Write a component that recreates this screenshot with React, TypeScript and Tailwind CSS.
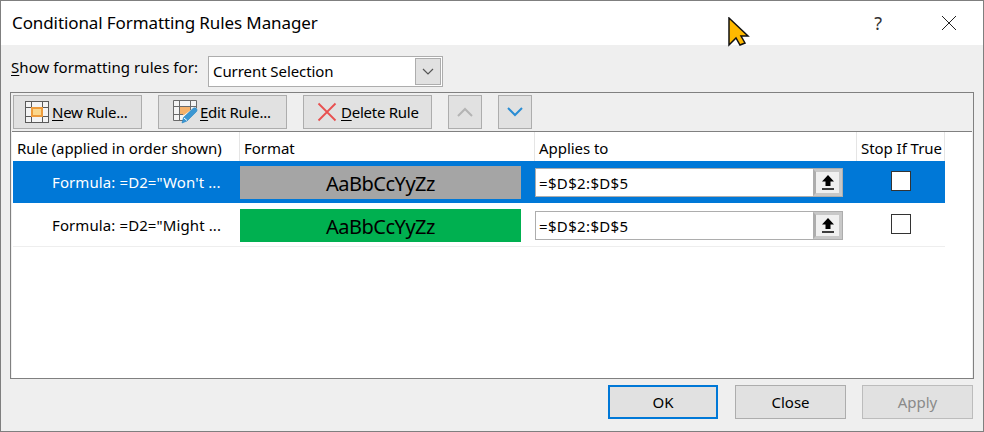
const FONT = "font-['Noto_Sans','Open_Sans',sans-serif]";

function GridIcon() {
  return (
    <svg width="24" height="22" viewBox="0 0 24 22" className="shrink-0">
      <rect x="0.5" y="0.5" width="23" height="21" fill="#f4f4f4" stroke="#5a5a5a" />
      <path d="M0 6.5H24M0 15.5H24M6.5 0V22M17.5 0V22" stroke="#5a5a5a" fill="none" />
      <rect x="7" y="7" width="10" height="8" fill="#fbd78b" stroke="#ed9b3c" strokeWidth="2" />
    </svg>
  );
}

function EditIcon() {
  return (
    <svg width="25" height="24" viewBox="0 0 25 24" className="shrink-0">
      <path d="M0.5 0.5H23.5V8L10 20.5H0.5Z" fill="#f4f4f4" stroke="#6a6a6a" />
      <path d="M7 6H18V10L11 15H7Z" fill="#f6b26b" />
      <path d="M0 6.5H23M0 14.5H10M6.5 0V20M17.5 0V10" stroke="#6a6a6a" fill="none" />
      <path d="M9 23L10.5 17.5L20 8.5C21 7.6 22.6 7.7 23.4 8.6C24.2 9.5 24.2 10.9 23.3 11.8L14 21Z" fill="#3b97d3" stroke="#1f7fc0" strokeWidth="0.6" />
      <path d="M11 18L14 20.5" stroke="#ffffff" />
    </svg>
  );
}

function DeleteIcon() {
  return (
    <svg width="20" height="20" viewBox="0 0 20 20" className="shrink-0">
      <path d="M1.5 1.5L18.5 18.5M18.5 1.5L1.5 18.5" stroke="#e8504f" strokeWidth="1.8" fill="none" />
    </svg>
  );
}

function ToolButton({ icon, hot, rest, gap, w }: { icon: React.ReactNode; hot: string; rest: string; gap: string; w: string }) {
  return (
    <button className={`h-[34px] ${w} bg-[#e1e1e1] border border-[#adadad] flex items-center ${gap} text-[15px] text-[#000] shrink-0`}>
      {icon}
      <span className="tracking-[-0.25px] pt-px">
        <span className="underline underline-offset-2">{hot}</span>
        {rest}
      </span>
    </button>
  );
}

function Chevron({ up, color }: { up?: boolean; color: string }) {
  return (
    <svg width="16" height="10" viewBox="0 0 16 10">
      <path d={up ? 'M1 9L8 2L15 9' : 'M1 1L8 8L15 1'} stroke={color} strokeWidth="2" fill="none" />
    </svg>
  );
}

function RuleRow({ text, selected, swatch, last }: { text: string; selected?: boolean; swatch: string; last?: boolean }) {
  return (
    <div className={`flex w-[932px] ${selected ? 'h-[42px] bg-[#0078d7] text-white' : 'text-[#000]'} ${last ? 'h-[44px] pt-px border-b border-[#eeeeee]' : ''}`}>
      <div className="w-[227px] pl-[39px] pt-[11px] text-[15px] leading-5 tracking-[0.1px] whitespace-nowrap">{text}</div>
      <div className="w-[281px] mt-[5px] h-[33px] pt-[2px] flex items-center justify-center text-[20px] text-[#000] tracking-[-0.5px]" style={{ backgroundColor: swatch }}>
        AaBbCcYyZz
      </div>
      <div className="ml-[14px] mt-[7px] h-[29px] w-[308px] bg-white border border-[#adadad] flex text-[#000]">
        <span className="flex-1 pl-[3px] text-[15px] leading-[28px] tracking-[0.35px]">=$D$2:$D$5</span>
        <div className="w-[29px] h-[27px] border-[3px] border-[#c8c8c8] border-l-[#adadad] bg-[#f0f0f0] flex items-center justify-center">
          <svg width="14" height="17" viewBox="0 0 14 17">
            <path d="M7 1L13 7.5H9.5V12H4.5V7.5H1Z" fill="#000" />
            <path d="M1 15H13" stroke="#000" strokeWidth="1.5" />
          </svg>
        </div>
      </div>
      <div className="ml-[48px] mt-[10px] w-5 h-5 bg-white border border-[#333]" />
    </div>
  );
}

export default function App() {
  return (
    <div className={`w-[984px] h-[432px] bg-[#efefef] border border-[#7f7f7f] flex flex-col relative overflow-hidden ${FONT}`}>
      {/* barra de título */}
      <div className="h-[44px] bg-white flex items-center shrink-0">
        <span className="pl-[11px] text-[17px] text-[#000] tracking-[-0.1px] flex-1">Conditional Formatting Rules Manager</span>
        <span className="text-[18px] text-[#333] mr-[59px]">?</span>
        <svg width="16" height="16" viewBox="0 0 16 16" className="mr-[26px]">
          <path d="M1 1L15 15M15 1L1 15" stroke="#222" strokeWidth="1" fill="none" />
        </svg>
      </div>

      <div className="flex items-center h-[31px] mt-[11px] pl-[10px] shrink-0">
        <span className="w-[197px] text-[15px] text-[#000] tracking-[0.07px] -mt-[9px] whitespace-nowrap">
          <span className="underline underline-offset-2">S</span>how formatting rules for:
        </span>
        <div className="w-[235px] h-[31px] bg-white border border-[#adadad] flex items-center justify-between">
          <span className="pl-[4px] text-[15px] text-[#000] tracking-[-0.07px]">Current Selection</span>
          <div className="w-[26px] h-[27px] mr-px bg-[#e1e1e1] border border-[#adadad] flex items-center justify-center">
            <svg width="12" height="7" viewBox="0 0 12 7">
              <path d="M1 1L6 6L11 1" stroke="#555" strokeWidth="1.2" fill="none" />
            </svg>
          </div>
        </div>
      </div>

      <div className="ml-[9px] mt-[5px] w-[964px] h-[287px] border border-[#808080] flex flex-col shrink-0">
        <div className="flex items-center h-[38px] pb-px pl-[2px] gap-[16px] shrink-0">
          <ToolButton w="w-[129px]" gap="pl-[11px] gap-[3px]" icon={<GridIcon />} hot="N" rest="ew Rule..." />
          <ToolButton w="w-[129px]" gap="pl-[14px] gap-[2px]" icon={<EditIcon />} hot="E" rest="dit Rule..." />
          <ToolButton w="w-[129px]" gap="pl-[13px] gap-[4px]" icon={<DeleteIcon />} hot="D" rest="elete Rule" />
          <button className="w-[34px] h-[34px] bg-[#e1e1e1] border border-[#adadad] flex items-center justify-center">
            <Chevron up color="#b4b4b4" />
          </button>
          <button className="w-[34px] h-[34px] bg-[#e1e1e1] border border-[#adadad] flex items-center justify-center">
            <Chevron color="#2a8dd4" />
          </button>
        </div>

        <div className="mx-px flex-1 bg-white border-t border-[#808080] pl-px">
          <div className="flex h-[29px] w-[932px] text-[15px] text-[#000] tracking-[-0.05px]">
            <div className="w-[227px] pl-[4px] leading-[32px] border-r border-[#e5e5e5] whitespace-nowrap">Rule (applied in order shown)</div>
            <div className="w-[295px] pl-[4px] leading-[32px] border-r border-[#e5e5e5]">Format</div>
            <div className="w-[322px] pl-[4px] leading-[32px] border-r border-[#e5e5e5]">Applies to</div>
            <div className="flex-1 pl-[4px] leading-[32px] border-r border-[#e5e5e5] whitespace-nowrap">Stop If True</div>
          </div>
          <RuleRow selected text={'Formula: =D2="Won\'t ...'} swatch="#a5a5a5" />
          <RuleRow last text={'Formula: =D2="Might ...'} swatch="#00b050" />
        </div>
      </div>

      <div className="flex justify-end pr-[10px] mt-[6px] shrink-0">
        <button className="w-[110px] h-[34px] bg-[#e1e1e1] border-2 border-[#0078d7] text-[15px] text-[#000]">OK</button>
        <button className="w-[111px] h-[34px] ml-[17px] bg-[#e1e1e1] border border-[#adadad] text-[15px] text-[#000]">Close</button>
        <button className="w-[111px] h-[34px] ml-[16px] bg-[#e1e1e1] border border-[#bcbcbc] text-[15px] text-[#8a8a8a]">Apply</button>
      </div>

      {/* cursor destacado */}
      <svg width="22" height="30" viewBox="0 0 22 30" className="absolute left-[727px] top-[16px]">
        <path d="M1 1L20 19H13L17 26L12 28L8 21L1 28Z" fill="#ffb900" stroke="#111" strokeWidth="1.5" />
      </svg>
    </div>
  );
}
